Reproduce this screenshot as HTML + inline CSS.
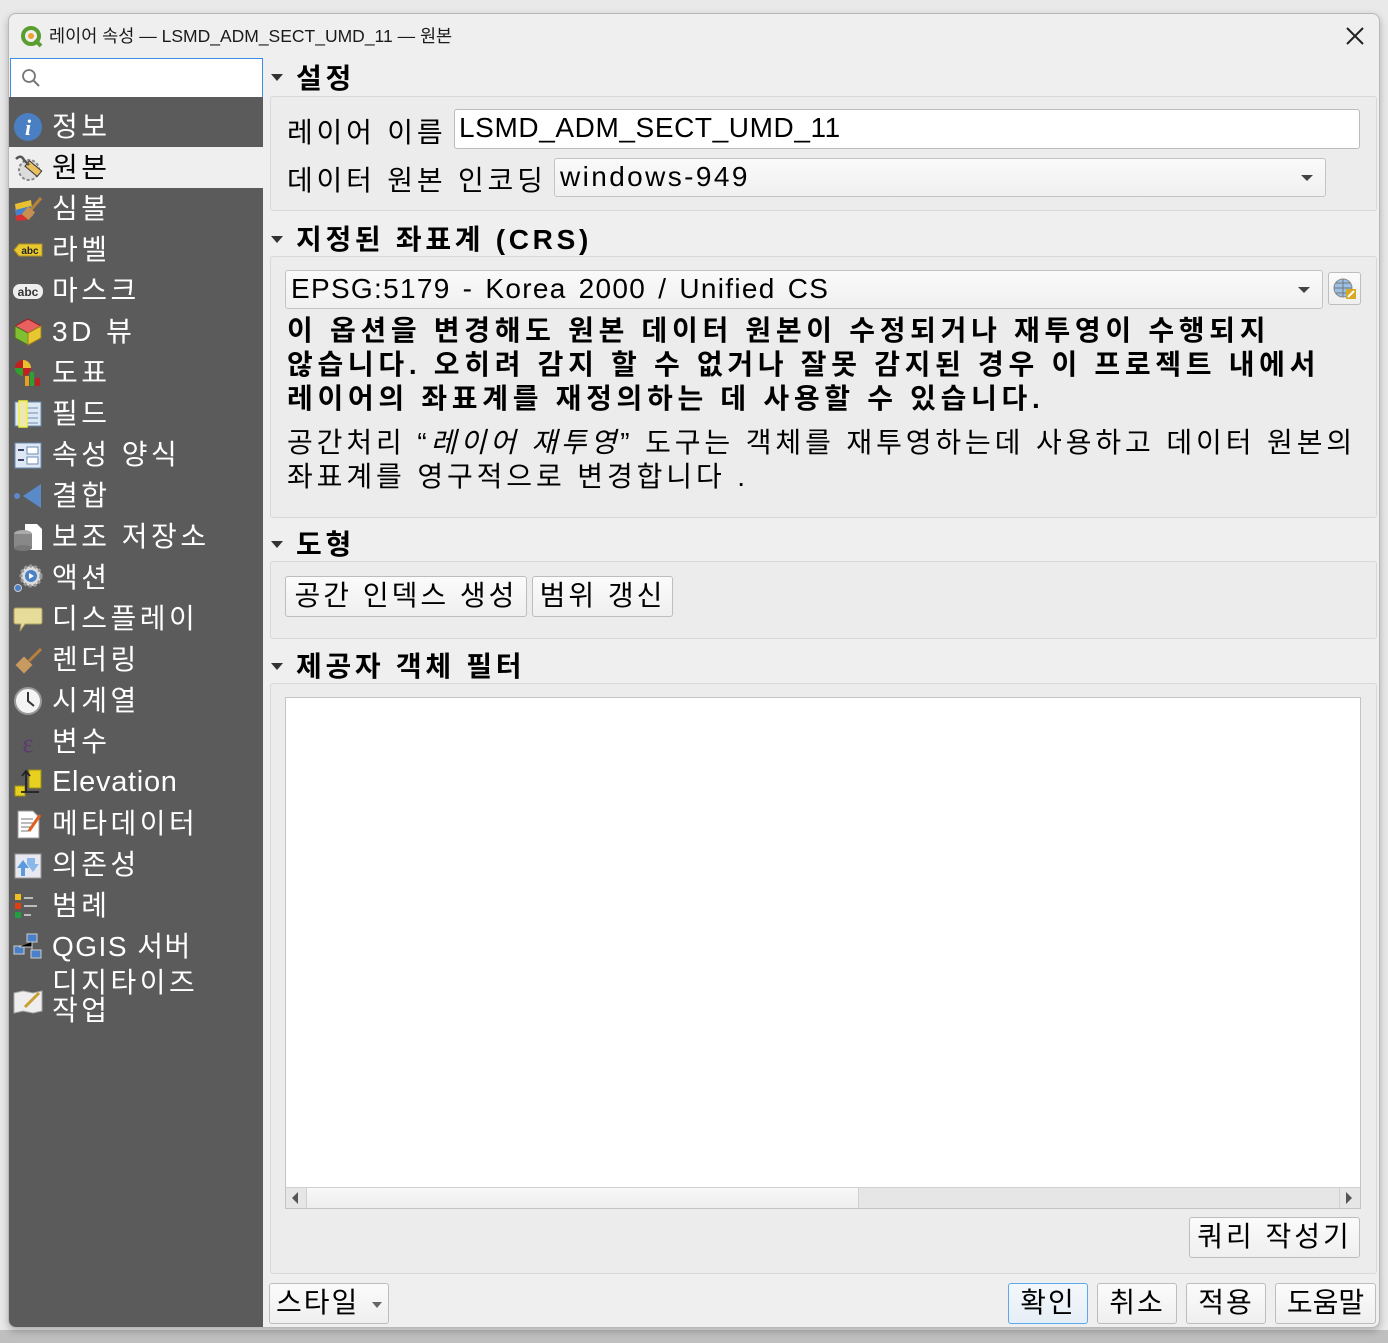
<!DOCTYPE html>
<html><head><meta charset="utf-8"><style>
*{margin:0;padding:0;box-sizing:border-box}
body{width:1388px;height:1343px;background:#e9e9e9;position:relative;overflow:hidden;font-family:"Liberation Sans","Noto Sans CJK KR","NanumGothic",sans-serif;color:#000}
.a{position:absolute;white-space:nowrap}
svg text{letter-spacing:0}
#win{position:absolute;left:8px;top:13px;width:1372px;height:1315px;background:#efefef;border:1px solid #b8b8b8;border-radius:8px;overflow:hidden;box-shadow:0 3px 8px rgba(0,0,0,.25)}
#bottomshade{position:absolute;left:0;top:1330px;width:1388px;height:13px;background:#bfbfbf}
.side{position:absolute;left:0;top:83px;width:254px;height:1240px;background:#5b5b5b}
.it{position:absolute;left:0;width:254px;height:41px;color:#fff;font-size:28px;line-height:41px;padding-left:43px;letter-spacing:3.5px}
.it.sel{background:#efefef;color:#000}
.ic{position:absolute;left:4px;top:6px;width:30px;height:30px}
.hd{position:absolute;font-size:28px;font-weight:bold;letter-spacing:3.7px}
.tri{position:absolute;width:0;height:0;border-left:6px solid transparent;border-right:6px solid transparent;border-top:7px solid #333}
.grp{position:absolute;border:1px solid #d8d8d8;border-radius:3px;background:#ececec}
.lbl{font-size:28px;letter-spacing:3.8px}
.inp{position:absolute;background:#fff;border:1px solid #bcbcbc;border-radius:3px;font-size:28px;line-height:36px;padding-left:4px;letter-spacing:0.6px}
.cmb{position:absolute;background:linear-gradient(#fafafa,#f0f0f0);border:1px solid #c4c4c4;border-radius:3px;font-size:28px;line-height:36px;padding-left:5px}
.cmb .dn{position:absolute;right:12px;top:16px;border-left:6px solid transparent;border-right:6px solid transparent;border-top:6px solid #444}
.btn{position:absolute;background:linear-gradient(#fbfbfb,#efefef);border:1px solid #bdbdbd;border-radius:3px;font-size:28px;line-height:38px;text-align:center;letter-spacing:2px}
</style></head><body>
<div id="bottomshade"></div>
<div id="win">
 <svg class="a" style="left:11px;top:11px" width="24" height="24" viewBox="0 0 24 24"><circle cx="11" cy="11" r="8" fill="none" stroke="#5a9e2f" stroke-width="4"/><path d="M15 15 L21 21" stroke="#5a9e2f" stroke-width="4"/><circle cx="11" cy="11" r="3" fill="#f0a030"/></svg>
 <div class="a" style="left:40px;top:9px;font-size:17.5px;color:#1a1a1a">레이어 속성 — LSMD_ADM_SECT_UMD_11 — 원본</div>
 <svg class="a" style="left:1336px;top:12px" width="20" height="20"><path d="M2 2L18 18M18 2L2 18" stroke="#222" stroke-width="2"/></svg>

 <div class="a" style="left:1px;top:44px;width:253px;height:40px;background:#fff;border:1px solid #3a8ee6"></div>
 <svg class="a" style="left:12px;top:54px" width="20" height="20"><circle cx="8" cy="8" r="6" fill="none" stroke="#777" stroke-width="1.8"/><path d="M12.5 12.5L18 18" stroke="#777" stroke-width="2"/></svg>

 <div class="side">
  <div class="it" style="top:9px"><svg class="ic" viewBox="0 0 30 30"><circle cx="15" cy="15" r="14" fill="#4a7fc4"/><text x="15" y="23" font-size="22" font-style="italic" font-weight="bold" fill="#fff" text-anchor="middle" font-family="Liberation Serif">i</text></svg>정보</div>
  <div class="it sel" style="top:50px"><svg class="ic" viewBox="0 0 30 30"><circle cx="16" cy="17" r="10" fill="#dcdcdc" stroke="#888" stroke-width="2" stroke-dasharray="3 2"/><rect x="12" y="12" width="16" height="7" fill="#e8c060" stroke="#333" transform="rotate(40 20 16)"/><path d="M3 6 Q8 1 11 7 L16 12" stroke="#555" stroke-width="2.5" fill="none"/></svg>원본</div>
  <div class="it" style="top:91px"><svg class="ic" viewBox="0 0 30 30"><path d="M2 10 L18 6 L20 22 L4 26Z" fill="#e8c030"/><path d="M2 16 L18 12 L20 22 L4 26Z" fill="#4a80c8"/><path d="M2 22 L14 19 L14 26 L4 27Z" fill="#d83030"/><path d="M16 18 L28 4" stroke="#b8803a" stroke-width="3"/><rect x="11" y="14" width="9" height="10" fill="#c89050" transform="rotate(40 15 19)"/></svg>심볼</div>
  <div class="it" style="top:132px"><svg class="ic" viewBox="0 0 30 30"><path d="M1 15 L6 9 H29 V21 H6Z" fill="#e8c830" stroke="#b09020"/><text x="17" y="19" font-size="10" font-weight="bold" text-anchor="middle" fill="#222">abc</text></svg>라벨</div>
  <div class="it" style="top:173px"><svg class="ic" viewBox="0 0 30 30"><rect x="0" y="8" width="30" height="15" rx="7" fill="#eee"/><text x="15" y="20" font-size="12" font-weight="bold" text-anchor="middle" fill="#333">abc</text></svg>마스크</div>
  <div class="it" style="top:214px"><svg class="ic" viewBox="0 0 30 30"><path d="M15 2 L28 9 L15 16 L2 9Z" fill="#e86060" stroke="#a02020"/><path d="M2 9 L15 16 V28 L2 21Z" fill="#80c030" stroke="#507020"/><path d="M28 9 L15 16 V28 L28 21Z" fill="#e8c830" stroke="#a08020"/></svg>3D 뷰</div>
  <div class="it" style="top:255px"><svg class="ic" viewBox="0 0 30 30"><circle cx="10" cy="10" r="8" fill="#c02020"/><path d="M10 10 L10 2 A8 8 0 0 1 18 10Z" fill="#e8c030"/><path d="M10 10 L2 10 A8 8 0 0 0 10 18Z" fill="#30a030"/><rect x="12" y="18" width="4" height="10" fill="#e8a020"/><rect x="17" y="14" width="4" height="14" fill="#30a030"/><rect x="22" y="20" width="5" height="8" fill="#c02020"/></svg>도표</div>
  <div class="it" style="top:296px"><svg class="ic" viewBox="0 0 30 30"><rect x="2" y="3" width="26" height="24" fill="#dde8f4" stroke="#6a8ab0"/><path d="M12 9H25M12 14H25M12 19H25M12 24H25" stroke="#6a8ab0"/><rect x="6" y="2" width="8" height="26" fill="#eee8b0" stroke="#f0f040" stroke-width="1.5"/></svg>필드</div>
  <div class="it" style="top:337px"><svg class="ic" viewBox="0 0 30 30"><rect x="2" y="3" width="26" height="25" fill="#dde8f4" stroke="#6a8ab0"/><rect x="14" y="7" width="11" height="7" fill="#fff" stroke="#6a8ab0"/><rect x="14" y="17" width="11" height="7" fill="#fff" stroke="#6a8ab0"/><path d="M5 10H11M5 20H11" stroke="#446" stroke-width="2"/></svg>속성 양식</div>
  <div class="it" style="top:378px"><svg class="ic" viewBox="0 0 30 30"><circle cx="4" cy="15" r="3" fill="#5a8ac8"/><path d="M10 15 L28 3 V27Z" fill="#5a8ac8"/></svg>결합</div>
  <div class="it" style="top:419px"><svg class="ic" viewBox="0 0 30 30"><path d="M12 2H24L29 7V28H12Z" fill="#fff"/><ellipse cx="10" cy="12" rx="9" ry="4" fill="#aaa"/><rect x="1" y="12" width="18" height="14" fill="#888"/><ellipse cx="10" cy="26" rx="9" ry="3" fill="#777"/></svg>보조 저장소</div>
  <div class="it" style="top:460px"><svg class="ic" viewBox="0 0 30 30"><circle cx="18" cy="13" r="10" fill="#ddd" stroke="#999" stroke-width="3" stroke-dasharray="3 2"/><circle cx="18" cy="13" r="6" fill="#4a80c8"/><path d="M16 10L21 13L16 16Z" fill="#fff"/><circle cx="5" cy="25" r="3.5" fill="#4a80c8" stroke="#ccc"/></svg>액션</div>
  <div class="it" style="top:501px"><svg class="ic" viewBox="0 0 30 30"><path d="M3 4H27Q29 4 29 6V18Q29 20 27 20H12L7 27L8 20H3Q1 20 1 18V6Q1 4 3 4Z" fill="#e8dc9a" stroke="#b0a060"/></svg>디스플레이</div>
  <div class="it" style="top:542px"><svg class="ic" viewBox="0 0 30 30"><path d="M16 16L28 4" stroke="#b8803a" stroke-width="3"/><rect x="5" y="14" width="12" height="12" fill="#c89a60" transform="rotate(45 11 20)"/></svg>렌더링</div>
  <div class="it" style="top:583px"><svg class="ic" viewBox="0 0 30 30"><circle cx="15" cy="15" r="13" fill="#f4f4f4" stroke="#999" stroke-width="2"/><path d="M15 6V15L21 20" stroke="#333" stroke-width="2" fill="none"/></svg>시계열</div>
  <div class="it" style="top:624px"><svg class="ic" viewBox="0 0 30 30"><text x="15" y="25" font-size="26" fill="#5a3a70" text-anchor="middle" font-family="Liberation Serif">ε</text></svg>변수</div>
  <div class="it" style="top:665px;font-size:29px;letter-spacing:0.7px"><svg class="ic" viewBox="0 0 30 30"><rect x="16" y="2" width="12" height="18" fill="#e8d020" stroke="#a09010"/><rect x="2" y="18" width="10" height="10" fill="#e8d020" stroke="#a09010"/><path d="M13 24V4M9 8L13 3L17 8M8 24H26" stroke="#222" stroke-width="1.8" fill="none"/></svg>Elevation</div>
  <div class="it" style="top:706px"><svg class="ic" viewBox="0 0 30 30"><path d="M5 2H20L26 8V29H5Z" fill="#fff" stroke="#999"/><path d="M8 10H20M8 14H20M8 18H18M8 22H16" stroke="#777"/><path d="M16 22L27 6" stroke="#e06020" stroke-width="3"/></svg>메타데이터</div>
  <div class="it" style="top:747px"><svg class="ic" viewBox="0 0 30 30"><rect x="2" y="4" width="26" height="24" fill="#e8e8f0" stroke="#999"/><path d="M4 18L10 10L16 18H12V26H8V18Z" fill="#5a9ae0"/><path d="M14 8H22V14H26L20 22L14 14Z" fill="#8ab8e8"/></svg>의존성</div>
  <div class="it" style="top:788px"><svg class="ic" viewBox="0 0 30 30"><rect x="2" y="3" width="6" height="6" fill="#f0c020"/><rect x="2" y="12" width="6" height="6" fill="#e04010"/><rect x="2" y="21" width="6" height="6" fill="#20a040"/><path d="M11 7H20M11 15H24M11 24H18" stroke="#bbb" stroke-width="2"/></svg>범례</div>
  <div class="it" style="top:829px;letter-spacing:1.5px"><svg class="ic" viewBox="0 0 30 30"><rect x="14" y="2" width="10" height="8" fill="#4a80c8" stroke="#ccc"/><rect x="1" y="14" width="10" height="8" fill="#4a80c8" stroke="#ccc"/><rect x="18" y="18" width="10" height="8" fill="#4a80c8" stroke="#ccc"/><path d="M19 10V15H6M19 15V18" stroke="#ccc"/></svg>QGIS 서버</div>
  <div class="it" style="top:872px;line-height:28px;padding-top:0"><svg class="ic" style="top:18px" viewBox="0 0 30 30"><path d="M1 6L10 4L20 6L29 4V24L20 26L10 24L1 26Z" fill="#eee" stroke="#aaa"/><path d="M12 20L26 6" stroke="#c8a030" stroke-width="3"/></svg>디지타이즈<br>작업</div>
 </div>

 <div class="tri" style="left:262px;top:60px"></div>
 <div class="hd" style="left:287px;top:43px">설정</div>
 <div class="grp" style="left:261px;top:82px;width:1107px;height:115px"></div>
 <div class="a lbl" style="left:278px;top:97px">레이어 이름</div>
 <div class="inp" style="left:445px;top:95px;width:906px;height:40px">LSMD_ADM_SECT_UMD_11</div>
 <div class="a lbl" style="left:278px;top:145px">데이터 원본 인코딩</div>
 <div class="cmb" style="left:545px;top:144px;width:772px;height:39px;letter-spacing:2.4px">windows-949<div class="dn"></div></div>

 <div class="tri" style="left:262px;top:222px"></div>
 <div class="hd" style="left:287px;top:204px">지정된 좌표계 (CRS)</div>
 <div class="grp" style="left:261px;top:242px;width:1107px;height:262px"></div>
 <div class="cmb" style="left:276px;top:256px;width:1038px;height:39px;letter-spacing:1.3px;word-spacing:3px">EPSG:5179 - Korea 2000 / Unified CS<div class="dn"></div></div>
 <div class="btn" style="left:1319px;top:258px;width:33px;height:33px"><svg style="position:absolute;left:4px;top:5px" width="24" height="22" viewBox="0 0 24 22"><circle cx="10" cy="10" r="9" fill="#9ac0e8" stroke="#888"/><path d="M1 10H19M10 1V19M3 5H17M3 15H17" stroke="#777"/><rect x="13" y="11" width="10" height="10" fill="#d8a820"/><path d="M15 19L21 13" stroke="#fff" stroke-width="2"/></svg></div>
 <div class="a" style="left:278px;top:300px;font-size:28px;font-weight:bold;line-height:34px;letter-spacing:4.7px">이 옵션을 변경해도 원본 데이터 원본이 수정되거나 재투영이 수행되지<br>않습니다. 오히려 감지 할 수 없거나 잘못 감지된 경우 이 프로젝트 내에서<br>레이어의 좌표계를 재정의하는 데 사용할 수 있습니다.</div>
 <div class="a" style="left:278px;top:412px;font-size:28px;line-height:34px;letter-spacing:3.9px">공간처리 “<i>레이어 재투영</i>” 도구는 객체를 재투영하는데 사용하고 데이터 원본의<br>좌표계를 영구적으로 변경합니다 .</div>

 <div class="tri" style="left:262px;top:527px"></div>
 <div class="hd" style="left:287px;top:509px">도형</div>
 <div class="grp" style="left:261px;top:547px;width:1107px;height:78px"></div>
 <div class="btn" style="left:276px;top:562px;width:242px;height:41px;letter-spacing:3px">공간 인덱스 생성</div>
 <div class="btn" style="left:523px;top:562px;width:141px;height:41px;letter-spacing:3px">범위 갱신</div>

 <div class="tri" style="left:262px;top:649px"></div>
 <div class="hd" style="left:287px;top:631px">제공자 객체 필터</div>
 <div class="grp" style="left:261px;top:669px;width:1107px;height:591px"></div>
 <div class="a" style="left:276px;top:683px;width:1076px;height:512px;background:#fff;border:1px solid #c4c4c4"></div>
 <div class="a" style="left:277px;top:1173px;width:1074px;height:21px;background:#e6e6e6;border-top:1px solid #d0d0d0"></div>
 <div class="a" style="left:297px;top:1174px;width:553px;height:20px;background:linear-gradient(#f8f8f8,#eee);border-left:1px solid #d0d0d0;border-right:1px solid #d0d0d0"></div>
 <div class="a" style="left:1330px;top:1174px;width:1px;height:20px;background:#d0d0d0"></div>
 <div class="a" style="left:283px;top:1178px;border-top:6px solid transparent;border-bottom:6px solid transparent;border-right:6px solid #555"></div>
 <div class="a" style="left:1337px;top:1178px;border-top:6px solid transparent;border-bottom:6px solid transparent;border-left:6px solid #555"></div>
 <div class="btn" style="left:1180px;top:1203px;width:171px;height:41px;letter-spacing:3px">쿼리 작성기</div>

 <div class="btn" style="left:260px;top:1269px;width:120px;height:41px;text-align:left;padding-left:6px">스타일<span style="position:absolute;right:6px;top:18px;border-left:5px solid transparent;border-right:5px solid transparent;border-top:6px solid #666"></span></div>
 <div class="btn" style="left:999px;top:1269px;width:80px;height:41px;border-color:#5aa8f0;background:linear-gradient(#f4f8fc,#e6eef6)">확인</div>
 <div class="btn" style="left:1088px;top:1269px;width:80px;height:41px">취소</div>
 <div class="btn" style="left:1177px;top:1269px;width:80px;height:41px">적용</div>
 <div class="btn" style="left:1266px;top:1269px;width:101px;height:41px;letter-spacing:0">도움말</div>
</div>
</body></html>
